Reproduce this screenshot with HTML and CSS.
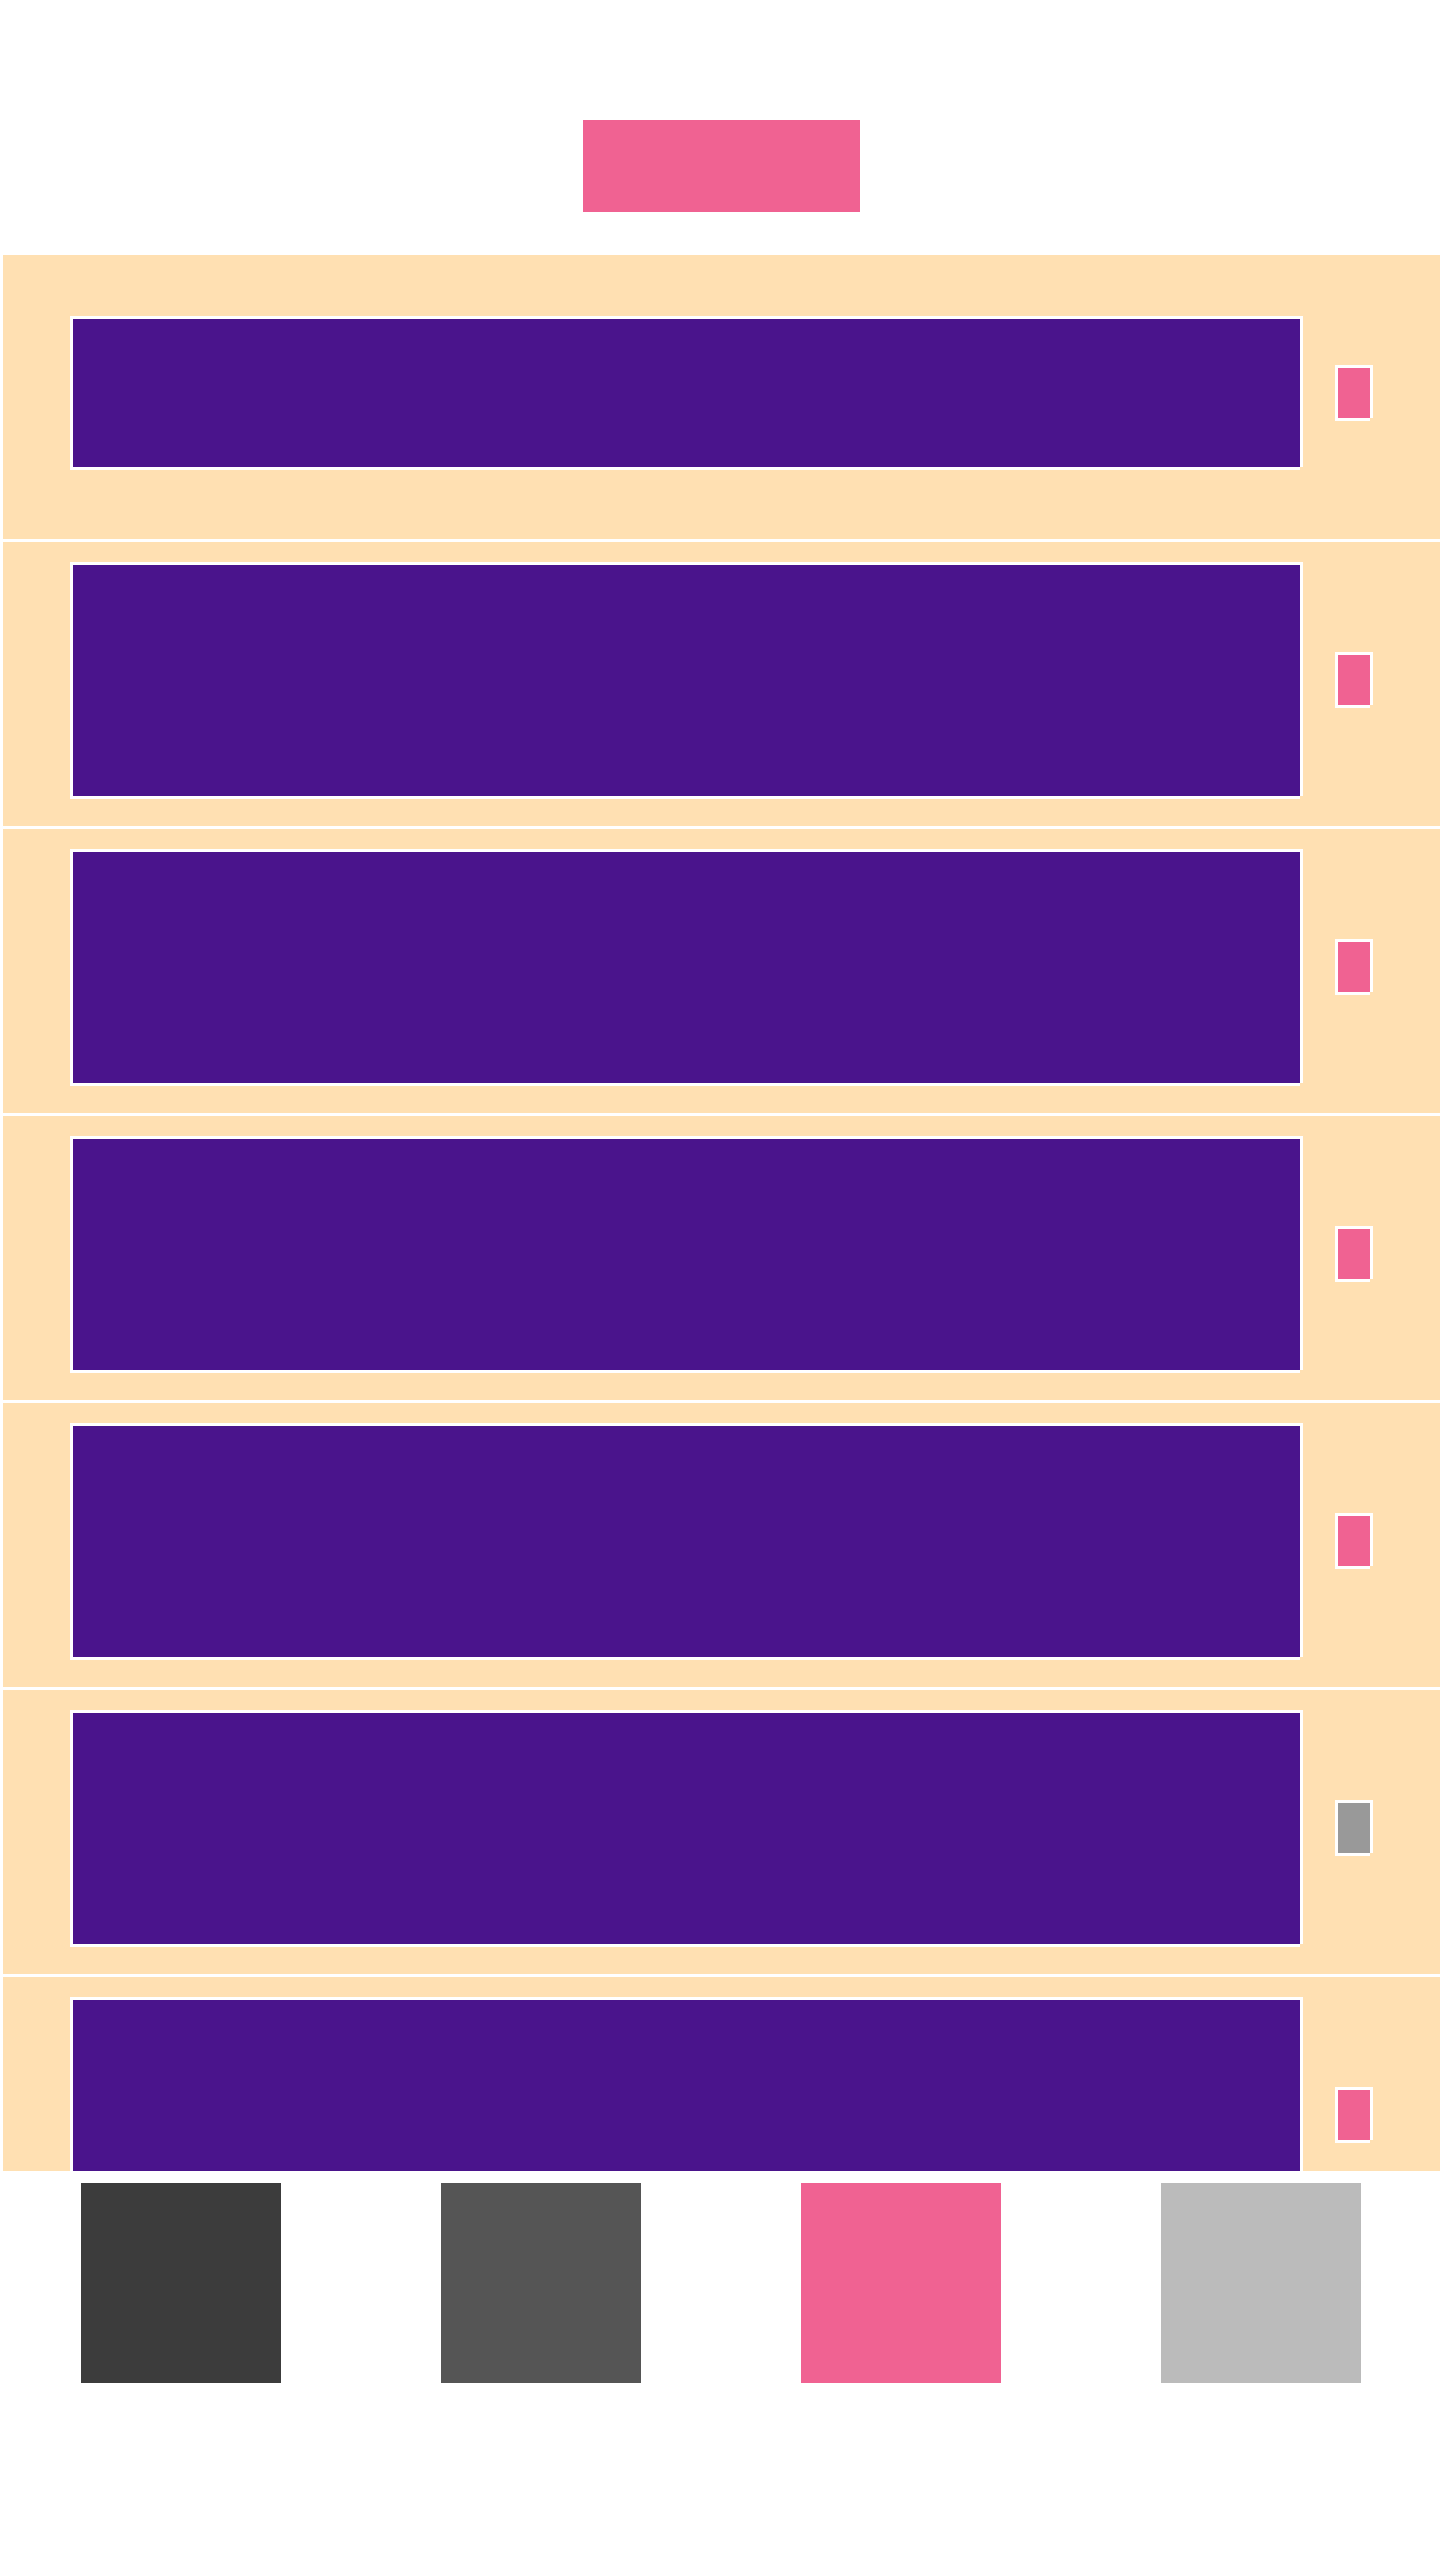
FILE: index.html
```html
<!DOCTYPE html>
<html lang="en">
<head>
<meta charset="utf-8">
<title>List</title>
<link rel="stylesheet" href="styles.css">
</head>
<body>
<div class="page">
  <header class="header">
    <div class="header-btn"></div>
  </header>
  <main class="list">
    <div class="row">
      <div class="card card-short"></div>
      <div class="toggle"></div>
    </div>
    <div class="row">
      <div class="card"></div>
      <div class="toggle"></div>
    </div>
    <div class="row">
      <div class="card"></div>
      <div class="toggle"></div>
    </div>
    <div class="row">
      <div class="card"></div>
      <div class="toggle"></div>
    </div>
    <div class="row">
      <div class="card"></div>
      <div class="toggle"></div>
    </div>
    <div class="row">
      <div class="card"></div>
      <div class="toggle toggle-off"></div>
    </div>
    <div class="row">
      <div class="card"></div>
      <div class="toggle"></div>
    </div>
  </main>
  <nav class="tabbar">
    <div class="tab tab-1"></div>
    <div class="tab tab-2"></div>
    <div class="tab tab-3"></div>
    <div class="tab tab-4"></div>
  </nav>
</div>
</body>
</html>
```

FILE: styles.css
```css
html, body {
  margin: 0;
  padding: 0;
  background: #ffffff;
  font-family: "Liberation Sans", Arial, sans-serif;
}

.page {
  width: 1440px;
  display: flex;
  flex-direction: column;
}

.header {
  height: 255px;
  padding-top: 120px;
  box-sizing: border-box;
  display: flex;
  justify-content: center;
  align-items: flex-start;
}

.header-btn {
  width: 277px;
  height: 92px;
  margin-left: 3px;
  background: #f06292;
}

.list {
  height: 1916px;
  overflow: hidden;
  margin-left: 3px;
  display: flex;
  flex-direction: column;
}

.row {
  flex: 0 0 auto;
  height: 284px;
  margin-bottom: 3px;
  box-sizing: border-box;
  padding: 0 70px 11px 67px;
  background: #ffe0b2;
  display: flex;
  align-items: center;
  gap: 35px;
}

.card {
  flex: 0 0 auto;
  width: 1230px;
  height: 234px;
  box-sizing: border-box;
  background: #4a148c;
  border-left: 3px solid #ffffff;
  border-top: 3px solid #ffffff;
  box-shadow: 3px 0 0 #ffffff, 0 3px 0 #ffffff;
}

.card-short {
  height: 151px;
}

.toggle {
  flex: 0 0 auto;
  width: 35px;
  height: 53px;
  box-sizing: border-box;
  background: #f06292;
  border-left: 3px solid #ffffff;
  border-top: 3px solid #ffffff;
  box-shadow: 3px 0 0 #ffffff, 0 3px 0 #ffffff;
}

.toggle-off {
  background: #999999;
}

.tabbar {
  margin-top: 12px;
  padding-left: 81px;
  display: flex;
  gap: 160px;
}

.tab {
  flex: 0 0 auto;
  width: 200px;
  height: 200px;
}

.tab-1 { background: #3c3c3c; }
.tab-2 { background: #555555; }
.tab-3 { background: #f06292; }
.tab-4 { background: #bbbbbb; }
```
